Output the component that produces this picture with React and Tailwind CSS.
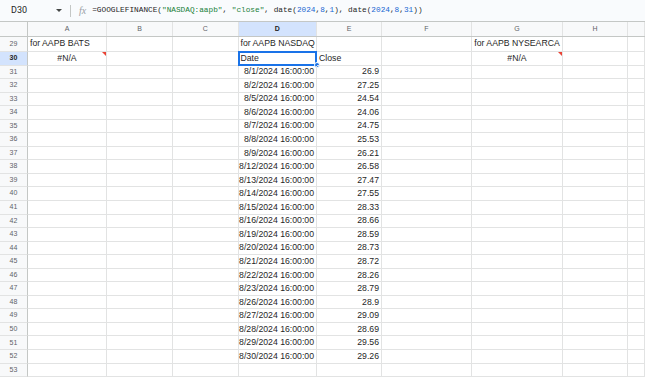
import React from 'react'

const COLS = ['A', 'B', 'C', 'D', 'E', 'F', 'G', 'H', '']
const WIDTHS = ['w-[79px]', 'w-[66px]', 'w-[65.5px]', 'w-[78.5px]', 'w-[65px]', 'w-[90px]', 'w-[91px]', 'w-[65px]', 'w-[17px]']

const DATA = [
  ['8/1/2024', '26.9'], ['8/2/2024', '27.25'], ['8/5/2024', '24.54'], ['8/6/2024', '24.06'],
  ['8/7/2024', '24.75'], ['8/8/2024', '25.53'], ['8/9/2024', '26.21'], ['8/12/2024', '26.58'],
  ['8/13/2024', '27.47'], ['8/14/2024', '27.55'], ['8/15/2024', '28.33'], ['8/16/2024', '28.66'],
  ['8/19/2024', '28.59'], ['8/20/2024', '28.73'], ['8/21/2024', '28.72'], ['8/22/2024', '28.26'],
  ['8/23/2024', '28.79'], ['8/26/2024', '28.9'], ['8/27/2024', '29.09'], ['8/28/2024', '28.69'],
  ['8/29/2024', '29.56'], ['8/30/2024', '29.26'],
]

function ErrFlag() {
  return <span className="absolute top-0 right-0 w-0 h-0 border-t-[4px] border-l-[4px] border-t-[#ea4335] border-l-transparent" />
}

function Cell({ w, children, align = 'left', className = '' }) {
  const al = align === 'right' ? 'justify-end pr-[2px]' : align === 'center' ? 'justify-center' : 'justify-start pl-[2px]'
  return (
    <div className={`relative shrink-0 h-full flex items-center border-r border-b border-[#e2e3e3] ${w} ${al} ${className}`}>
      {children}
    </div>
  )
}

function Row({ num, h = 'h-[13.55px]', cells = {}, selected = false }) {
  return (
    <div className={`flex ${h}`}>
      <div className={`shrink-0 w-[28px] h-full flex items-center justify-center border-r border-r-[#c4c7c5] border-b border-b-[#e2e3e3] text-[7px] ${selected ? 'bg-[#d3e3fd] text-[#1f1f1f] font-bold' : 'bg-[#f8f9fa] text-[#5f6368]'}`}>
        {num}
      </div>
      {COLS.map((c, i) => {
        const cell = cells[c] || {}
        return (
          <Cell key={i} w={WIDTHS[i]} align={cell.align}>
            {cell.text && <span className="whitespace-nowrap">{cell.text}</span>}
            {cell.err && <ErrFlag />}
            {cell.sel && (
              <>
                <span className="absolute -top-px -left-px -right-px -bottom-px border-2 border-[#1a73e8]" />
                <span className="absolute -right-[3.5px] -bottom-[3.5px] w-[6px] h-[6px] rounded-full bg-[#1a73e8] border border-white" />
              </>
            )}
          </Cell>
        )
      })}
    </div>
  )
}

export default function App() {
  return (
    <div className="w-[645px] h-[380px] overflow-hidden bg-white text-[8.7px] text-[#1f1f1f]" style={{ fontFamily: '"Liberation Sans", Arial, sans-serif' }}>
      {/* formula bar */}
      <div className="flex items-center h-[22px] bg-[#f9fbfd] border-b border-[#c4c7c5]">
        <div className="w-[56px] pl-[11px] text-[9px] text-[#1f1f1f]" style={{ fontFamily: 'Roboto, sans-serif' }}>D30</div>
        <span className="w-0 h-0 border-l-[3px] border-r-[3px] border-t-[3px] border-l-transparent border-r-transparent border-t-[#444746]" />
        <div className="ml-[8px] w-px h-[12px] bg-[#c4c7c5]" />
        <span className="ml-[8px] text-[10px] italic text-[#9aa0a6]" style={{ fontFamily: '"Liberation Serif", serif' }}>fx</span>
        <div className="ml-[6px] text-[7.75px] text-[#1f1f1f] whitespace-nowrap" style={{ fontFamily: '"Liberation Mono", monospace' }}>
          =GOOGLEFINANCE(<span className="text-[#188038]">"NASDAQ:aapb"</span>, <span className="text-[#188038]">"close"</span>, date(<span className="text-[#1967d2]">2024</span>,<span className="text-[#1967d2]">8</span>,<span className="text-[#1967d2]">1</span>), date(<span className="text-[#1967d2]">2024</span>,<span className="text-[#1967d2]">8</span>,<span className="text-[#1967d2]">31</span>))
        </div>
      </div>

      {/* column headers */}
      <div className="flex h-[15px] bg-[#f8f9fa] border-b border-[#c4c7c5] text-[7px] text-[#5f6368]">
        <div className="shrink-0 w-[28px] h-full border-r border-[#c4c7c5]" />
        {COLS.map((c, i) => (
          <div key={i} className={`shrink-0 h-full flex items-center justify-center border-r border-[#e2e3e3] ${WIDTHS[i]} ${c === 'D' ? 'bg-[#d3e3fd] text-[#1f1f1f] font-bold' : ''}`}>
            {c}
          </div>
        ))}
      </div>

      <Row num={29} h="h-[15px]" cells={{ A: { text: 'for AAPB BATS' }, D: { text: 'for AAPB NASDAQ' }, G: { text: 'for AAPB NYSEARCA', align: 'center' } }} />
      <Row
        num={30}
        selected
        cells={{
          A: { text: '#N/A', align: 'center', err: true },
          D: { text: 'Date', sel: true },
          E: { text: 'Close' },
          G: { text: '#N/A', align: 'center', err: true },
        }}
      />
      {DATA.map(([d, v], i) => (
        <Row key={i} num={31 + i} cells={{ D: { text: `${d} 16:00:00`, align: 'right' }, E: { text: v, align: 'right' } }} />
      ))}
      <Row num={53} />
    </div>
  )
}
